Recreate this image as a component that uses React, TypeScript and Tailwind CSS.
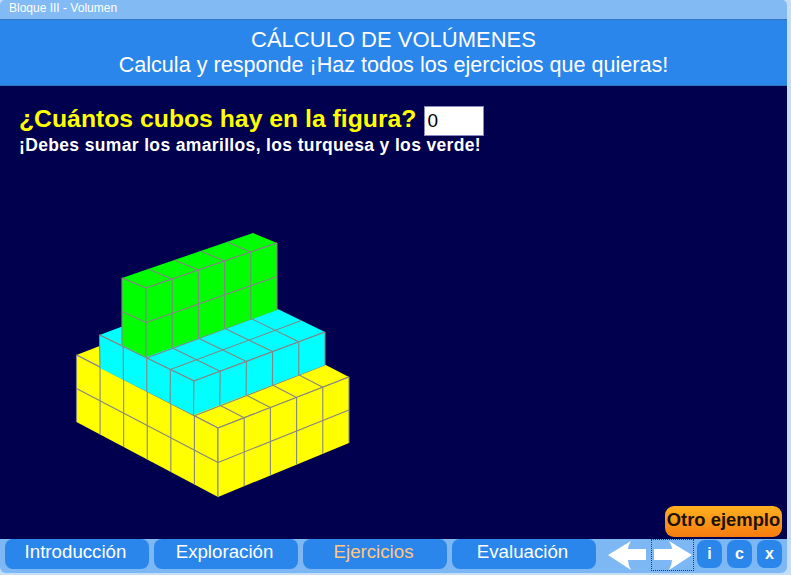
type Pt = [number, number];
type Edge = "top" | "bottom" | "left" | "right";

const NAV = ["Introducción", "Exploración", "Ejercicios", "Evaluación"];

function lerp(a: Pt, b: Pt, t: number): Pt {
  return [a[0] + (b[0] - a[0]) * t, a[1] + (b[1] - a[1]) * t];
}

// quad corners go a -> b along the top, d -> c along the bottom
function Face({ q, cols, rows, fill, omit = [] }: { q: [Pt, Pt, Pt, Pt]; cols: number; rows: number; fill: string; omit?: Edge[] }) {
  const [a, b, c, d] = q;
  const lines: [Pt, Pt][] = [];
  for (let i = 0; i <= cols; i++) {
    if ((i === 0 && omit.includes("left")) || (i === cols && omit.includes("right"))) continue;
    lines.push([lerp(a, b, i / cols), lerp(d, c, i / cols)]);
  }
  for (let j = 0; j <= rows; j++) {
    if ((j === 0 && omit.includes("top")) || (j === rows && omit.includes("bottom"))) continue;
    lines.push([lerp(a, d, j / rows), lerp(b, c, j / rows)]);
  }
  return (
    <g>
      <polygon points={q.map((p) => p.join(",")).join(" ")} fill={fill} />
      {lines.map(([p, r], i) => (
        <line key={i} x1={p[0]} y1={p[1]} x2={r[0]} y2={r[1]} stroke="#858585" strokeWidth={1.1} />
      ))}
    </g>
  );
}

function Cubes() {
  return (
    <svg className="absolute left-0 top-0" width={791} height={575} viewBox="0 0 791 575">
      {/* yellow */}
      <Face q={[[76.5, 355], [207.5, 304], [349, 377], [218, 428]]} cols={5} rows={6} fill="#ffff00" omit={["top", "right"]} />
      <Face q={[[76.5, 355], [218, 428], [218, 497], [76.5, 422]]} cols={6} rows={2} fill="#ffff00" omit={["bottom"]} />
      <Face q={[[218, 428], [349, 377], [349, 443], [218, 497]]} cols={5} rows={2} fill="#ffff00" omit={["bottom"]} />
      {/* cyan */}
      <Face q={[[99.5, 335], [230.5, 286], [325, 332], [194, 381]]} cols={5} rows={4} fill="#00ffff" omit={["top", "right"]} />
      <Face q={[[99.5, 335], [194, 381], [193.5, 415], [100, 368]]} cols={4} rows={1} fill="#00ffff" omit={["bottom"]} />
      <Face q={[[194, 381], [325, 332], [325, 365], [193.5, 415]]} cols={5} rows={1} fill="#00ffff" omit={["bottom"]} />
      {/* green */}
      <Face q={[[122, 278], [253, 233], [277, 243], [146, 288]]} cols={5} rows={1} fill="#00ff00" omit={["top", "right"]} />
      <Face q={[[122, 278], [146, 288], [146, 357], [122, 345]]} cols={1} rows={2} fill="#00ff00" omit={["bottom"]} />
      <Face q={[[146, 288], [277, 243], [277, 310], [146, 357]]} cols={5} rows={2} fill="#00ff00" omit={["bottom"]} />
    </svg>
  );
}

function Arrow({ flip }: { flip?: boolean }) {
  return (
    <svg width={39} height={30} viewBox="0 0 39 30" className={flip ? "-scale-x-100" : ""}>
      <path d="M0 15 L23 1 Q20 6 20 9 L38 9 L38 20 L20 20 Q20 25 23 30 Z" fill="#ffffff" />
    </svg>
  );
}

export default function App() {
  return (
    <div className="relative flex h-[575px] w-[791px] flex-col overflow-hidden bg-[#c4def8] pr-[4px] font-['Liberation_Sans',Arial,sans-serif] text-white">
      <div className="h-[19px] shrink-0 rounded-t-[5px] bg-[#82baf3] pl-[9px] text-[12px] leading-[17px]">Bloque III - Volumen</div>
      <header className="flex h-[67px] shrink-0 flex-col items-center border-y border-y-[#3574c0] bg-[#2a86ea] pt-[7px] leading-[25px]">
        <div className="text-[22px]">CÁLCULO DE VOLÚMENES</div>
        <div className="text-[21.6px]">Calcula y responde ¡Haz todos los ejercicios que quieras!</div>
      </header>
      <main className="relative h-[453px] shrink-0 bg-[#00004f] pl-[19px] pt-[19px]">
        <div className="flex items-start gap-[8px] text-[24.75px] leading-[28px] font-bold text-[#ffff00]">
          <span>¿Cuántos cubos hay en la figura?</span>
          <input
            readOnly
            value="0"
            className="mt-[1px] h-[30px] w-[60px] border border-[#8a8ac0] bg-white pl-[2px] text-[19px] leading-[30px] font-normal text-black outline-none"
          />
        </div>
        <div className="text-[17.5px] leading-[19px] font-bold tracking-[0.35px] text-white">¡Debes sumar los amarillos, los turquesa y los verde!</div>
        <button className="absolute right-[5px] bottom-[2px] h-[31px] w-[117px] rounded-[9px] bg-gradient-to-b from-[#ffb020] to-[#f57c10] pb-[3px] text-[18.4px] leading-[26px] font-bold text-[#201000]">
          Otro ejemplo
        </button>
      </main>
      <nav className="mb-[2px] flex flex-1 items-start gap-[5px] rounded-b-[6px] bg-[#7db8f4] pl-[5px]">
        {NAV.map((n, i) => (
          <div
            key={n}
            className={`flex h-[30px] w-[144px] items-center justify-center rounded-[8px] bg-[#2a86ea] pr-[3px] pb-[3px] text-[18.7px] ${i === 2 ? "text-[#ffc880]" : "text-white"}`}
          >
            {n}
          </div>
        ))}
        <div className="ml-[7px] flex items-center">
          <Arrow />
          <div className="ml-[4px] h-[32px] w-[43px] border border-dotted border-[#204060] pl-[1px]">
            <Arrow flip />
          </div>
        </div>
        <div className="mt-[1px] ml-[-2px] flex gap-[5px]">
          {["i", "c", "x"].map((l) => (
            <div key={l} className="flex h-[28px] w-[25px] items-center justify-center rounded-[8px] bg-[#2a86ea] text-[16px] font-bold">
              {l}
            </div>
          ))}
        </div>
      </nav>
      <Cubes />
    </div>
  );
}
